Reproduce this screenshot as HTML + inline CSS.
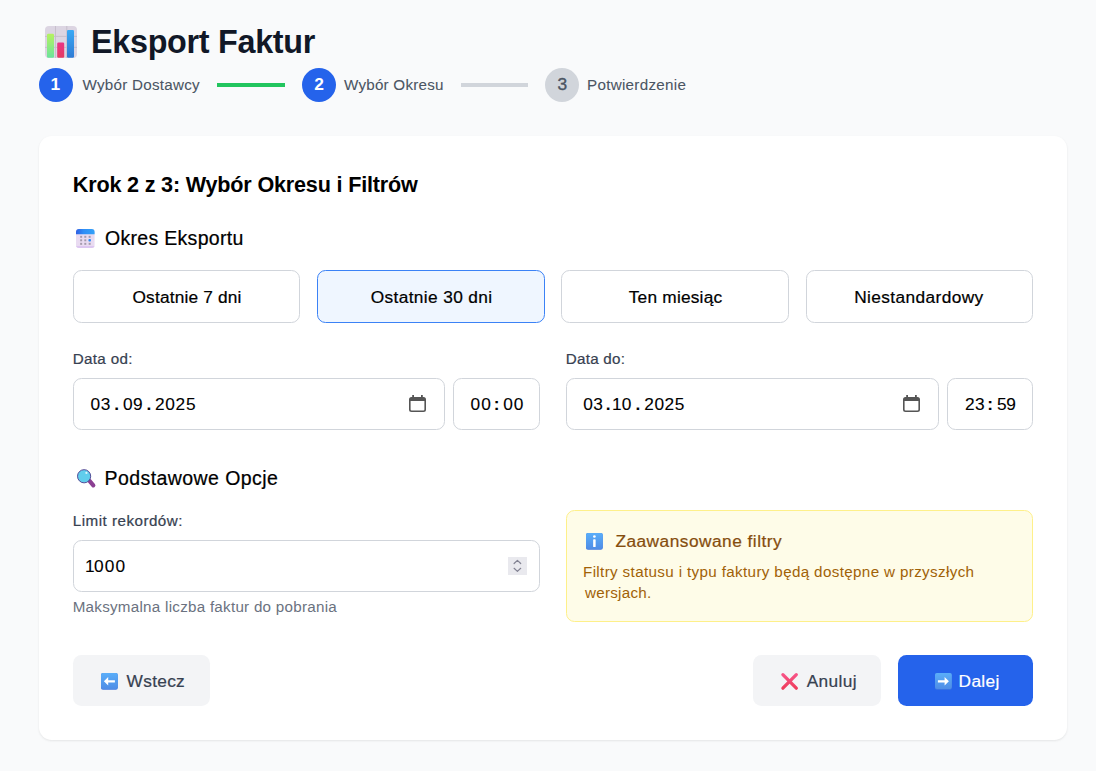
<!DOCTYPE html>
<html lang="pl">
<head>
<meta charset="utf-8">
<title>Eksport Faktur</title>
<style>
*{box-sizing:border-box;margin:0;padding:0}
html,body{width:1096px;height:771px;overflow:hidden}
body{background:#f9fafb;font-family:"Liberation Sans",sans-serif;color:#111827;position:relative}
.t{position:absolute;white-space:nowrap;line-height:1}
.abs{position:absolute}
svg{position:absolute;overflow:visible}
.circle{position:absolute;width:34px;height:34px;border-radius:50%;background:#2563eb}
.circle.off{background:#d1d5db}
.num{position:absolute;white-space:nowrap;line-height:1;font-size:16px;color:#fff;-webkit-text-stroke:.3px #fff}
.bar{position:absolute;height:4px;top:83px}
.card{position:absolute;left:39px;top:136px;width:1028px;height:604px;background:#fff;border-radius:12.8px;box-shadow:0 1px 3px rgba(0,0,0,.055),0 1px 2px rgba(0,0,0,.035)}
.opt{position:absolute;top:270px;height:52.5px;border:1px solid #d1d5db;border-radius:8.5px;background:#fff}
.opt.sel{background:#eff6ff;border-color:#3b82f6}
.inp{position:absolute;height:52px;border:1px solid #d1d5db;border-radius:8.5px;background:#fff}
.btn{position:absolute;top:655px;height:51px;border-radius:8.5px;background:#f3f4f6}
</style>
</head>
<body>
<!-- header icon: bar chart -->
<svg style="left:45px;top:26px" width="32" height="32" viewBox="0 0 32 32">
<defs>
<linearGradient id="gG" x1="0" y1="0" x2="0" y2="1"><stop offset="0" stop-color="#b6f25f"/><stop offset="1" stop-color="#6be39c"/></linearGradient>
<linearGradient id="gP" x1="0" y1="0" x2="0" y2="1"><stop offset="0" stop-color="#ea3385"/><stop offset="1" stop-color="#e53b62"/></linearGradient>
<linearGradient id="gB" x1="0" y1="0" x2="0" y2="1"><stop offset="0" stop-color="#3aa9f5"/><stop offset="1" stop-color="#2f7ad4"/></linearGradient>
<linearGradient id="gI" x1="0" y1="0" x2="0" y2="1"><stop offset="0" stop-color="#5aaef9"/><stop offset="1" stop-color="#4f8de6"/></linearGradient>
<linearGradient id="gC" x1="0" y1="0" x2="1" y2="0"><stop offset="0" stop-color="#2d5fe3"/><stop offset=".4" stop-color="#2f8df6"/><stop offset="1" stop-color="#35a2f7"/></linearGradient>
<linearGradient id="gX" x1="0" y1="0" x2="0" y2="1"><stop offset="0" stop-color="#f75386"/><stop offset="1" stop-color="#ee3d5c"/></linearGradient>
</defs>
<rect x="0" y="0" width="32" height="32" rx="4" fill="#dcd5e2"/>
<path d="M10.5 0V32M21.8 0V32M0 10.4H32M0 21.4H32" stroke="#c4bcca" stroke-width=".9" fill="none"/>
<rect x="2" y="7.7" width="7" height="24" rx="1.2" fill="url(#gG)"/>
<rect x="12.2" y="16.5" width="7" height="15.2" rx="1.2" fill="url(#gP)"/>
<rect x="22" y="4" width="7" height="27.7" rx="1.2" fill="url(#gB)"/>
</svg>

<!-- stepper -->
<div class="circle" style="left:39px;top:68px"></div>
<div class="bar" style="left:217px;width:68px;background:#22c55e"></div>
<div class="circle" style="left:301.9px;top:68px"></div>
<div class="bar" style="left:461px;width:67px;background:#d1d5db"></div>
<div class="circle off" style="left:545px;top:68px"></div>

<div class="card"></div>

<!-- calendar emoji -->
<svg style="left:76.3px;top:228.7px" width="18.6" height="19" viewBox="0 0 18.8 19.2">
<rect x="0" y="0" width="18.8" height="19.2" rx="3" fill="#e9dbf1"/>
<path d="M0 17.2h18.8a3 3 0 0 1-3 2H3a3 3 0 0 1-3-2z" fill="#dcc6f0"/>
<path d="M3 0h12.8a3 3 0 0 1 3 3v2.3H0V3a3 3 0 0 1 3-3z" fill="url(#gC)"/>
<g fill="#a59bad"><rect x="4.2" y="6.9" width="2" height="2"/><rect x="8.4" y="6.9" width="2" height="2"/><rect x="12.8" y="6.9" width="2" height="2"/>
<rect x="4.2" y="10.4" width="2" height="2"/><rect x="8.4" y="10.4" width="2" height="2"/>
<rect x="4.2" y="14" width="2" height="2"/><rect x="8.4" y="14" width="2" height="2"/><rect x="12.8" y="14" width="2" height="2"/></g>
<rect x="12.6" y="10.1" width="2.5" height="2.5" rx=".8" fill="#2f8df6"/>
</svg>

<div class="opt" style="left:73px;width:227px"></div>
<div class="opt sel" style="left:317px;width:228px"></div>
<div class="opt" style="left:561px;width:228px"></div>
<div class="opt" style="left:806px;width:227px"></div>

<div class="inp" style="left:73px;top:378px;width:372px"></div>
<div class="inp" style="left:453px;top:378px;width:87px"></div>
<div class="inp" style="left:566px;top:378px;width:373px"></div>
<div class="inp" style="left:947px;top:378px;width:86px"></div>

<!-- calendar picker icons -->
<svg style="left:409px;top:395px" width="17" height="17" viewBox="0 0 17 17">
<path d="M3.2 0h1.8v2h7V0h1.8v2h.7A2.5 2.5 0 0 1 17 4.500V14.500A2.500 2.500 0 0 1 14.500 17H2.500A2.500 2.500 0 0 1 0 14.500V4.500A2.500 2.500 0 0 1 2.500 2h.7zM1.600 6V14.400a1 1 0 0 0 1 1H14.400a1 1 0 0 0 1-1V6z" fill="#555" fill-rule="evenodd"/>
</svg>
<svg style="left:903px;top:395px" width="17" height="17" viewBox="0 0 17 17">
<path d="M3.2 0h1.8v2h7V0h1.8v2h.7A2.500 2.500 0 0 1 17 4.500V14.500A2.500 2.500 0 0 1 14.500 17H2.500A2.500 2.500 0 0 1 0 14.500V4.500A2.500 2.500 0 0 1 2.500 2h.7zM1.600 6V14.400a1 1 0 0 0 1 1H14.400a1 1 0 0 0 1-1V6z" fill="#555" fill-rule="evenodd"/>
</svg>

<!-- magnifier emoji -->
<svg style="left:76px;top:469px" width="20" height="19" viewBox="0 0 20 19">
<path d="M13.500 11.900L17.300 16.300" stroke="#8b3f92" stroke-width="4.200" stroke-linecap="round"/>
<circle cx="8.100" cy="7.250" r="6.600" fill="#60cdec" stroke="#4b3b8c" stroke-width=".9"/>
<circle cx="10.400" cy="3.900" r="1.100" fill="#d9f4fb"/>
</svg>

<div class="inp" style="left:73px;top:540px;width:467px"></div>
<!-- spinner -->
<svg style="left:508px;top:557px" width="19" height="18" viewBox="0 0 19 18">
<rect width="19" height="18" fill="#e9e9ee"/>
<path d="M6.100 6.500L9.400 3.400L12.700 6.500M6.100 11.300L9.400 14.400L12.700 11.300" stroke="#828292" stroke-width="1.200" fill="none" stroke-linecap="round" stroke-linejoin="round"/>
</svg>

<!-- yellow box -->
<div class="abs" style="left:566px;top:510px;width:467px;height:112px;background:#fefce8;border:1px solid #fef08a;border-radius:8.5px"></div>
<svg style="left:586.100px;top:532.700px" width="16.800" height="16.800" viewBox="0 0 16.800 16.800">
<rect width="16.800" height="16.800" rx="2" fill="#3f78e0"/>
<rect width="16.800" height="16" rx="2" fill="url(#gI)"/>
<circle cx="8.400" cy="3.500" r="1.350" fill="#fff"/>
<rect x="7.150" y="6.300" width="2.500" height="7.800" rx=".6" fill="#fff"/>
</svg>

<!-- buttons -->
<div class="btn" style="left:73px;width:137px"></div>
<svg style="left:101.100px;top:672.700px" width="16.800" height="16.800" viewBox="0 0 16.800 16.800">
<rect width="16.800" height="16.800" rx="2" fill="#3f78e0"/>
<rect width="16.800" height="16" rx="2" fill="url(#gI)"/>
<path d="M2.900 8.300L7.200 4.100V7.150H13.900V9.450H7.200V12.500z" fill="#fff"/>
</svg>
<div class="btn" style="left:753px;width:128px"></div>
<svg style="left:781px;top:672.500px" width="17" height="17" viewBox="0 0 17 17">
<path d="M1.900 1.700L15.300 15.200M15.300 1.700L1.900 15.200" stroke="url(#gX)" stroke-width="3.300" stroke-linecap="round" fill="none"/>
</svg>
<div class="btn" style="left:898px;width:135px;background:#2563eb"></div>
<svg style="left:935.300px;top:672.700px" width="16.800" height="16.800" viewBox="0 0 16.800 16.800">
<rect width="16.800" height="16.800" rx="2" fill="#3f78e0"/>
<rect width="16.800" height="16" rx="2" fill="url(#gI)"/>
<path d="M13.900 8.300L9.600 4.100V7.150H2.900V9.450H9.600V12.500z" fill="#fff"/>
</svg>

<div class="t" id="title" style="left:91.00px;top:26.00px;font-size:32.3px;color:#111827;letter-spacing:-0.273px;font-weight:bold;">Eksport Faktur</div>
<div class="t" id="s1" style="left:82.50px;top:77.00px;font-size:15.2px;color:#4b5563;letter-spacing:0.254px;-webkit-text-stroke:0.08px #4b5563;">Wybór Dostawcy</div>
<div class="t" id="s2" style="left:344.00px;top:77.00px;font-size:15.2px;color:#4b5563;letter-spacing:0.230px;-webkit-text-stroke:0.08px #4b5563;">Wybór Okresu</div>
<div class="t" id="s3" style="left:587.00px;top:77.00px;font-size:15.2px;color:#4b5563;letter-spacing:0.296px;-webkit-text-stroke:0.08px #4b5563;">Potwierdzenie</div>
<div class="t" id="n1" style="left:50.50px;top:76.00px;font-size:17.4px;color:#fff;letter-spacing:0.000px;font-weight:bold;">1</div>
<div class="t" id="n2" style="left:314.15px;top:76.00px;font-size:17.4px;color:#fff;letter-spacing:0.000px;font-weight:bold;">2</div>
<div class="t" id="n3" style="left:557.50px;top:76.00px;font-size:17.4px;color:#4b5563;letter-spacing:0.000px;-webkit-text-stroke:0.35px #4b5563;">3</div>
<div class="t" id="h2" style="left:72.75px;top:174.00px;font-size:21.6px;color:#000;letter-spacing:-0.186px;font-weight:bold;">Krok 2 z 3: Wybór Okresu i Filtrów</div>
<div class="t" id="h3a" style="left:105.00px;top:229.00px;font-size:19.5px;color:#000;letter-spacing:0.305px;-webkit-text-stroke:0.22px #000;">Okres Eksportu</div>
<div class="t" id="o1" style="left:132.50px;top:289.00px;font-size:17.3px;color:#000;letter-spacing:0.170px;-webkit-text-stroke:0.22px #000;">Ostatnie 7 dni</div>
<div class="t" id="o2" style="left:370.75px;top:289.00px;font-size:17.3px;color:#000;letter-spacing:0.364px;-webkit-text-stroke:0.22px #000;">Ostatnie 30 dni</div>
<div class="t" id="o3" style="left:628.75px;top:289.00px;font-size:17.3px;color:#000;letter-spacing:0.215px;-webkit-text-stroke:0.22px #000;">Ten miesiąc</div>
<div class="t" id="o4" style="left:854.25px;top:289.00px;font-size:17.3px;color:#000;letter-spacing:0.383px;-webkit-text-stroke:0.22px #000;">Niestandardowy</div>
<div class="t" id="l1" style="left:72.75px;top:351.00px;font-size:15.2px;color:#374151;letter-spacing:0.330px;-webkit-text-stroke:0.22px #374151;">Data od:</div>
<div class="t" id="l2" style="left:565.75px;top:351.00px;font-size:15.2px;color:#374151;letter-spacing:0.258px;-webkit-text-stroke:0.22px #374151;">Data do:</div>
<div class="t" id="d1a" style="left:90.60px;top:396.00px;font-size:17.3px;color:#000;letter-spacing:0.589px;-webkit-text-stroke:0.1px #000;">03</div>
<div class="t" id="d1b" style="left:114.15px;top:396.00px;font-size:17.3px;color:#000;letter-spacing:0.000px;font-weight:bold;">.</div>
<div class="t" id="d1c" style="left:122.90px;top:396.00px;font-size:17.3px;color:#000;letter-spacing:0.589px;-webkit-text-stroke:0.1px #000;">09</div>
<div class="t" id="d1d" style="left:146.45px;top:396.00px;font-size:17.3px;color:#000;letter-spacing:0.000px;font-weight:bold;">.</div>
<div class="t" id="d1e" style="left:154.90px;top:396.00px;font-size:17.3px;color:#000;letter-spacing:0.756px;-webkit-text-stroke:0.1px #000;">2025</div>
<div class="t" id="t1a" style="left:470.60px;top:396.00px;font-size:17.3px;color:#000;letter-spacing:1.089px;-webkit-text-stroke:0.1px #000;">00</div>
<div class="t" id="t1b" style="left:493.65px;top:396.00px;font-size:17.3px;color:#000;letter-spacing:0.000px;font-weight:bold;">:</div>
<div class="t" id="t1c" style="left:503.30px;top:396.00px;font-size:17.3px;color:#000;letter-spacing:0.889px;-webkit-text-stroke:0.1px #000;">00</div>
<div class="t" id="d2a" style="left:583.30px;top:396.00px;font-size:17.3px;color:#000;letter-spacing:0.289px;-webkit-text-stroke:0.1px #000;">03</div>
<div class="t" id="d2b" style="left:605.85px;top:396.00px;font-size:17.3px;color:#000;letter-spacing:0.000px;font-weight:bold;">.</div>
<div class="t" id="d2c" style="left:612.10px;top:396.00px;font-size:17.3px;color:#000;letter-spacing:0.000px;-webkit-text-stroke:0.1px #000;">1</div>
<div class="t" id="d2c2" style="left:621.65px;top:396.00px;font-size:17.3px;color:#000;letter-spacing:0.000px;-webkit-text-stroke:0.1px #000;">0</div>
<div class="t" id="d2d" style="left:635.60px;top:396.00px;font-size:17.3px;color:#000;letter-spacing:0.000px;font-weight:bold;">.</div>
<div class="t" id="d2e" style="left:644.30px;top:396.00px;font-size:17.3px;color:#000;letter-spacing:0.522px;-webkit-text-stroke:0.1px #000;">2025</div>
<div class="t" id="t2a" style="left:965.00px;top:396.00px;font-size:17.3px;color:#000;letter-spacing:0.389px;-webkit-text-stroke:0.1px #000;">23</div>
<div class="t" id="t2b" style="left:987.35px;top:396.00px;font-size:17.3px;color:#000;letter-spacing:0.000px;font-weight:bold;">:</div>
<div class="t" id="t2c" style="left:997.10px;top:396.00px;font-size:17.3px;color:#000;letter-spacing:-0.411px;-webkit-text-stroke:0.1px #000;">59</div>
<div class="t" id="h3b" style="left:104.50px;top:469.00px;font-size:19.5px;color:#000;letter-spacing:0.428px;-webkit-text-stroke:0.22px #000;">Podstawowe Opcje</div>
<div class="t" id="l3" style="left:72.75px;top:513.00px;font-size:15.2px;color:#374151;letter-spacing:0.482px;-webkit-text-stroke:0.22px #374151;">Limit rekordów:</div>
<div class="t" id="v1a" style="left:84.95px;top:558.00px;font-size:17.3px;color:#000;letter-spacing:0.000px;-webkit-text-stroke:0.1px #000;">1</div>
<div class="t" id="v1b" style="left:93.90px;top:558.00px;font-size:17.3px;color:#000;letter-spacing:1.189px;-webkit-text-stroke:0.1px #000;">000</div>
<div class="t" id="hp" style="left:72.70px;top:599.00px;font-size:15.2px;color:#6b7280;letter-spacing:0.260px;">Maksymalna liczba faktur do pobrania</div>
<div class="t" id="y1" style="left:615.40px;top:533.00px;font-size:17.3px;color:#854d0e;letter-spacing:0.484px;-webkit-text-stroke:0.22px #854d0e;">Zaawansowane filtry</div>
<div class="t" id="y2" style="left:583.00px;top:564.00px;font-size:15.2px;color:#a16207;letter-spacing:0.357px;">Filtry statusu i typu faktury będą dostępne w przyszłych</div>
<div class="t" id="y3" style="left:585.00px;top:585.00px;font-size:15.2px;color:#a16207;letter-spacing:0.259px;">wersjach.</div>
<div class="t" id="b1" style="left:126.60px;top:673.00px;font-size:17.3px;color:#374151;letter-spacing:0.299px;-webkit-text-stroke:0.22px #374151;">Wstecz</div>
<div class="t" id="b2" style="left:806.70px;top:673.00px;font-size:17.3px;color:#374151;letter-spacing:0.360px;-webkit-text-stroke:0.22px #374151;">Anuluj</div>
<div class="t" id="b3" style="left:958.60px;top:673.00px;font-size:17.3px;color:#fff;letter-spacing:0.315px;-webkit-text-stroke:0.22px #fff;">Dalej</div>
</body>
</html>
